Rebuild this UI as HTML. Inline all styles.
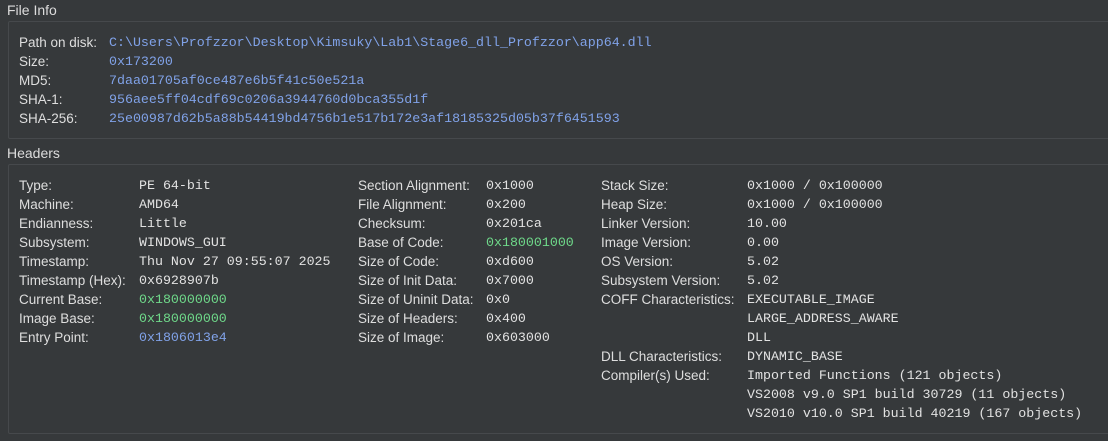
<!DOCTYPE html>
<html><head><style>
html,body{margin:0;padding:0;background:#36393b;width:1108px;height:441px;overflow:hidden;position:relative;color:#dedede;font-family:"Liberation Sans",sans-serif;font-size:13.5px}
.t{position:absolute;left:7px;font-size:14px;color:#dcdcdc}
.box{position:absolute;left:8px;right:-4px;border:1px solid #46494c;border-radius:2px}
.c{position:absolute;white-space:pre;line-height:19px}
.m{font-family:"Liberation Mono",monospace;font-size:13.3px;color:#e2e2e2}
.b{color:#80a2e8}.g{color:#6fd98a}
</style></head><body>
<div class="t" style="top:2px">File Info</div>
<div class="box" style="top:21px;height:116px"></div>
<div class="c" style="left:19px;top:33px">Path on disk:
Size:
MD5:
SHA-1:
SHA-256:</div>
<div class="c m b" style="left:109px;top:33px">C:\Users\Profzzor\Desktop\Kimsuky\Lab1\Stage6_dll_Profzzor\app64.dll
0x173200
7daa01705af0ce487e6b5f41c50e521a
956aee5ff04cdf69c0206a3944760d0bca355d1f
25e00987d62b5a88b54419bd4756b1e517b172e3af18185325d05b37f6451593</div>
<div class="t" style="top:145px">Headers</div>
<div class="box" style="top:164px;height:268px"></div>
<div class="c" style="left:19px;top:176px">Type:
Machine:
Endianness:
Subsystem:
Timestamp:
Timestamp (Hex):
Current Base:
Image Base:
Entry Point:</div>
<div class="c m" style="left:139px;top:176px">PE 64-bit
AMD64
Little
WINDOWS_GUI
Thu Nov 27 09:55:07 2025
0x6928907b
<span class="g">0x180000000</span>
<span class="g">0x180000000</span>
<span class="b">0x1806013e4</span></div>
<div class="c" style="left:358px;top:176px">Section Alignment:
File Alignment:
Checksum:
Base of Code:
Size of Code:
Size of Init Data:
Size of Uninit Data:
Size of Headers:
Size of Image:</div>
<div class="c m" style="left:486px;top:176px">0x1000
0x200
0x201ca
<span class="g">0x180001000</span>
0xd600
0x7000
0x0
0x400
0x603000</div>
<div class="c" style="left:601px;top:176px">Stack Size:
Heap Size:
Linker Version:
Image Version:
OS Version:
Subsystem Version:
COFF Characteristics:


DLL Characteristics:
Compiler(s) Used:</div>
<div class="c m" style="left:747px;top:176px">0x1000 / 0x100000
0x1000 / 0x100000
10.00
0.00
5.02
5.02
EXECUTABLE_IMAGE
LARGE_ADDRESS_AWARE
DLL
DYNAMIC_BASE
Imported Functions (121 objects)
VS2008 v9.0 SP1 build 30729 (11 objects)
VS2010 v10.0 SP1 build 40219 (167 objects)</div>
</body></html>
